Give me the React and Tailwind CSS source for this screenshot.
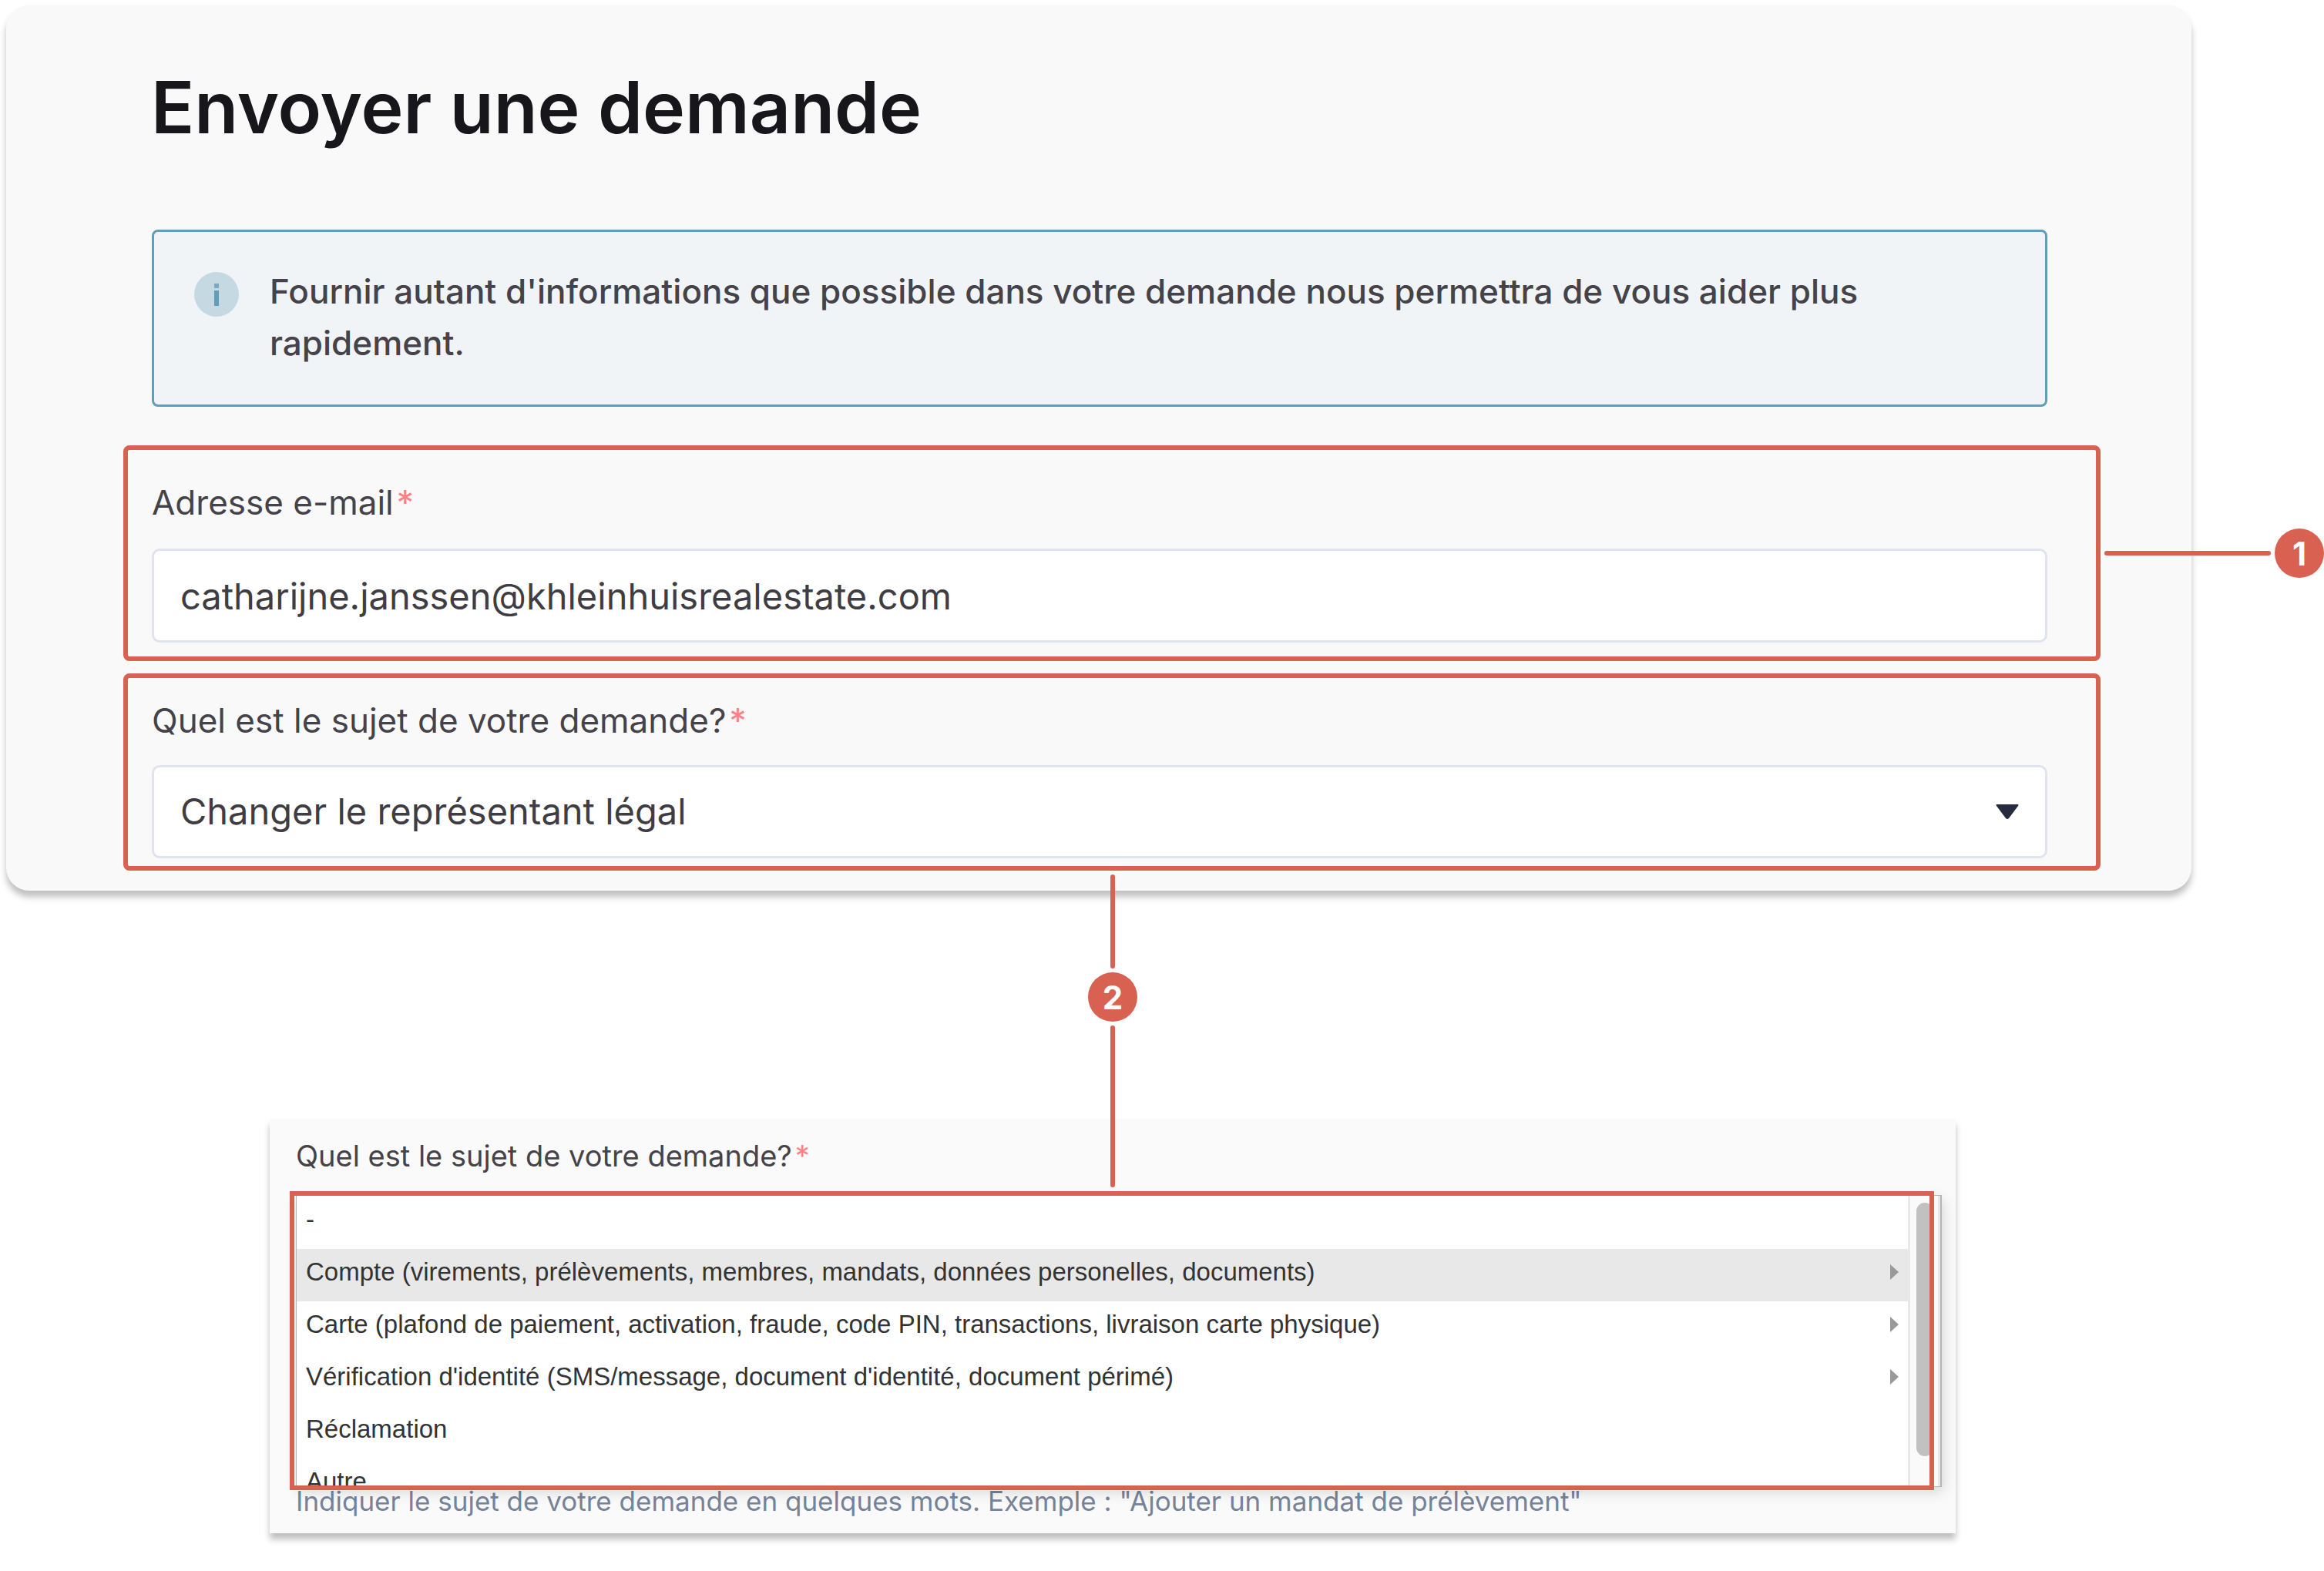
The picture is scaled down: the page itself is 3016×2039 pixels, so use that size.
import React from "react";

const topics = [
  { label: "-" },
  {
    label: "Compte (virements, prélèvements, membres, mandats, données personelles, documents)",
    more: true,
    active: true,
  },
  {
    label: "Carte (plafond de paiement, activation, fraude, code PIN, transactions, livraison carte physique)",
    more: true,
  },
  {
    label: "Vérification d'identité (SMS/message, document d'identité, document périmé)",
    more: true,
  },
  { label: "Réclamation" },
  { label: "Autre" },
];

const Required = () => <span className="text-[#ff8084] ml-1">*</span>;

const Badge = ({ children }) => (
  <span className="flex size-16 shrink-0 items-center justify-center rounded-full bg-[#d86151] pt-[2px] text-[42px] leading-none font-bold text-white">
    {children}
  </span>
);

const InfoIcon = () => (
  <svg className="mt-2 size-[58px] shrink-0" viewBox="0 0 58 58" aria-hidden="true">
    <circle cx="29" cy="29" r="29" fill="#c5d9e2" />
    <rect x="26" y="15" width="6" height="6" fill="#78aac1" />
    <rect x="26" y="24" width="6" height="20" fill="#629db9" />
  </svg>
);

const RequestForm = () => (
  <form className="rounded-[30px] bg-[#f9f9f9] pt-[84px] pr-[118px] pb-[26px] pl-[152px] shadow-[0_8px_8px_rgba(0,0,0,0.25)]">
    <h1 className="ml-9 text-[93px] leading-[96px] font-semibold text-[#17161b]">
      Envoyer une demande
    </h1>

    <div className="mt-[111px] mr-[69px] ml-[37px] flex gap-10 rounded-lg border-3 border-[#629db9] bg-[#f0f4f7] pt-11 pr-[200px] pb-[46px] pl-[52px]">
      <InfoIcon />
      <p className="text-[44px] leading-[67px] font-medium text-[#454349]">
        Fournir autant d'informations que possible dans votre demande nous permettra de vous aider plus
        rapidement.
      </p>
    </div>

    <div className="relative mt-[50px] rounded-lg border-6 border-[#d86151] pt-[44px] pr-[63px] pb-[18px] pl-[31px]">
      <label htmlFor="email" className="block text-[44px] leading-[48px] text-[#454349]">
        Adresse e-mail
        <Required />
      </label>
      <input
        id="email"
        type="email"
        defaultValue="catharijne.janssen@khleinhuisrealestate.com"
        className="mt-9 block h-[122px] w-full rounded-[10px] border-3 border-[#e0e4ee] bg-white px-[34px] text-[47px] text-[#3f3d43]"
      />
      <div className="absolute top-[102px] left-full ml-[11px] flex items-center gap-[5px]">
        <span className="h-[6px] w-[216px] rounded-full bg-[#d86151]" />
        <Badge>1</Badge>
      </div>
    </div>

    <div className="mt-4 rounded-lg border-6 border-[#d86151] pt-[31px] pr-[63px] pb-[10px] pl-[31px]">
      <label htmlFor="subject" className="block text-[44px] leading-[48px] text-[#454349]">
        Quel est le sujet de votre demande?
        <Required />
      </label>
      <div className="relative mt-[34px]">
        <select
          id="subject"
          className="block h-[121px] w-full appearance-none rounded-[10px] border-3 border-[#e0e4ee] bg-white px-[34px] text-[47px] text-[#3f3d43]"
        >
          <option>Changer le représentant légal</option>
        </select>
        <svg
          className="pointer-events-none absolute top-[51px] right-[37px] h-[19px] w-[30px]"
          viewBox="0 0 30 19"
          aria-hidden="true"
        >
          <path d="M1 0H29Q30 1 29 2L17 18Q15 20 13 18L1 2Q0 1 1 0Z" fill="#262b3d" />
        </svg>
      </div>
    </div>
  </form>
);

const TopicMenu = () => (
  <div className="relative mt-[31px]">
    <div className="flex h-[379px] overflow-hidden border border-r-2 border-[#b5b5b5] bg-white shadow-[2px_6px_16px_rgba(0,0,0,0.15)]">
      <ul className="min-w-0 flex-1 pt-px" aria-labelledby="topics-label">
        {topics.map((topic) => (
          <li key={topic.label}>
            <button
              type="button"
              className={`flex h-[68px] w-full items-center justify-between pr-3 pb-2 pl-3 text-left font-['Liberation_Sans',Arial,sans-serif] text-[33px] text-[#333] ${
                topic.active ? "bg-[#e8e8e8]" : "bg-white"
              }`}
            >
              {topic.label}
              {topic.more && (
                <svg className="h-5 w-[11px]" viewBox="0 0 11 20" aria-hidden="true">
                  <path d="M0 0L11 10L0 20Z" fill="#999" />
                </svg>
              )}
            </button>
          </li>
        ))}
      </ul>
      <div className="w-[42px] border-x-3 border-[#e8e8e8] bg-[#fafafa] pt-[9px] pl-2">
        <div className="h-[329px] w-[22px] rounded-full bg-[#c1c1c1]" />
      </div>
    </div>
    <div className="pointer-events-none absolute -top-[5px] right-[10px] -bottom-1 -left-2 border-6 border-[#d86151]" />
  </div>
);

const App = () => {
  return (
    <main className="min-h-screen bg-white pb-12 font-['Inter',sans-serif]">
      <section className="pt-[7px] pr-[172px] pl-2">
        <RequestForm />
      </section>

      <section className="pr-[478px] pl-[350px]">
        <div className="relative z-10 -mt-[21px] -mb-[89px] flex flex-col items-center gap-[5px]">
          <span className="h-[122px] w-[6px] rounded-full bg-[#d86151]" />
          <Badge>2</Badge>
          <span className="h-[210px] w-[6px] rounded-full bg-[#d86151]" />
        </div>
        <div className="bg-[#fafafa] pt-7 pr-[18px] pb-6 pl-[34px] shadow-[0_8px_8px_rgba(0,0,0,0.25)]">
          <p id="topics-label" className="text-[38px] leading-[40px] text-[#454349]">
            Quel est le sujet de votre demande?
            <Required />
          </p>
          <TopicMenu />
          <p className="text-[35px] leading-[36px] text-[#75849b]">
            Indiquer le sujet de votre demande en quelques mots. Exemple : "Ajouter un mandat de
            prélèvement"
          </p>
        </div>
      </section>
    </main>
  );
};

export default App;
